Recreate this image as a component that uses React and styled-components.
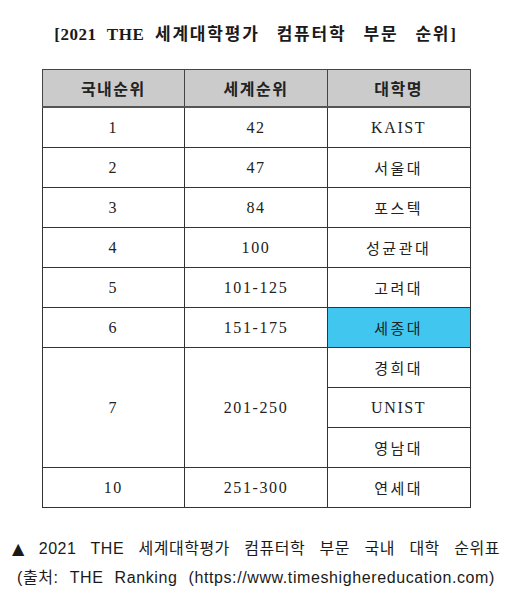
import React from "react";
import styled, { createGlobalStyle } from "styled-components";

const GlobalStyle = createGlobalStyle`
  html, body {
    margin: 0;
    padding: 0;
    background: #ffffff;
  }
  body {
    width: 512px;
    height: 603px;
    overflow: hidden;
  }
`;

const serif = `"Liberation Serif", "Noto Sans CJK KR", serif`;
const sans = `"Liberation Sans", "Noto Sans CJK KR", sans-serif`;

const Page = styled.div`
  display: flex;
  flex-direction: column;
  align-items: center;
  padding-top: 22px;
  color: #1a1a1a;
`;

const Title = styled.h1`
  margin: 0;
  font-family: ${serif};
  font-size: 17px;
  font-weight: bold;
  line-height: 26px;
  word-spacing: 11px;
  letter-spacing: 1.8px;
`;

const Latin = styled.span`
  word-spacing: 6px;
  letter-spacing: 0.5px;
`;

const Table = styled.table`
  margin-top: 21px;
  width: 429px;
  border-collapse: collapse;
  table-layout: fixed;
  border: 1.5px solid #333;
`;

const HeadCell = styled.th`
  height: 36px;
  padding: 0;
  background: #cbcbcb;
  border: 1px solid #444;
  border-bottom: 2px solid #555;
  font-family: ${sans};
  font-size: 16px;
  font-weight: bold;
  letter-spacing: 1.5px;
  color: #222;
`;

const Cell = styled.td`
  height: 39px;
  padding: 0;
  text-align: center;
  border: 1px solid #333;
  background: ${(p) => (p.$highlight ? "#41c6ef" : "#ffffff")};
  font-family: ${(p) => (p.$hangul ? sans : serif)};
  font-size: ${(p) => (p.$hangul ? "15px" : "16px")};
  letter-spacing: ${(p) => (p.$hangul ? "2.5px" : "1.6px")};
  color: #222;
`;

const Caption = styled.div`
  margin-top: 26px;
  display: flex;
  flex-direction: column;
  align-items: center;
  font-family: ${sans};
  font-size: 16px;
  line-height: 29px;
  color: #1a1a1a;
`;

const CaptionLine = styled.div`
  white-space: nowrap;
  word-spacing: ${(p) => p.$spacing || "0px"};
  letter-spacing: ${(p) => p.$letters || "0px"};
`;

const Triangle = styled.span`
  font-family: "DejaVu Sans", sans-serif;
  font-size: 16px;
  letter-spacing: 0;
`;

const rows = [
  { rank: "1", world: "42", names: ["KAIST"] },
  { rank: "2", world: "47", names: ["서울대"] },
  { rank: "3", world: "84", names: ["포스텍"] },
  { rank: "4", world: "100", names: ["성균관대"] },
  { rank: "5", world: "101-125", names: ["고려대"] },
  { rank: "6", world: "151-175", names: ["세종대"], highlight: true },
  { rank: "7", world: "201-250", names: ["경희대", "UNIST", "영남대"] },
  { rank: "10", world: "251-300", names: ["연세대"] },
];

const isHangul = (s) => /[\uac00-\ud7a3]/.test(s);

export default function App() {
  return (
    <>
      <GlobalStyle />
      <Page>
        <Title>
          <Latin>[2021 THE </Latin>세계대학평가 컴퓨터학 부문 순위]
        </Title>
        <Table>
          <thead>
            <tr>
              <HeadCell>국내순위</HeadCell>
              <HeadCell>세계순위</HeadCell>
              <HeadCell>대학명</HeadCell>
            </tr>
          </thead>
          <tbody>
            {rows.map((r) =>
              r.names.map((name, i) => (
                <tr key={r.rank + name}>
                  {i === 0 && <Cell rowSpan={r.names.length}>{r.rank}</Cell>}
                  {i === 0 && <Cell rowSpan={r.names.length}>{r.world}</Cell>}
                  <Cell $hangul={isHangul(name)} $highlight={r.highlight}>
                    {name}
                  </Cell>
                </tr>
              ))
            )}
          </tbody>
        </Table>
        <Caption>
          <CaptionLine $spacing="9.5px" $letters="0.5px">
            <Triangle>▲</Triangle> 2021 THE 세계대학평가 컴퓨터학 부문 국내 대학 순위표
          </CaptionLine>
          <CaptionLine $spacing="6px" $letters="0.6px">
            (출처: THE Ranking (https://www.timeshighereducation.com)
          </CaptionLine>
        </Caption>
      </Page>
    </>
  );
}
